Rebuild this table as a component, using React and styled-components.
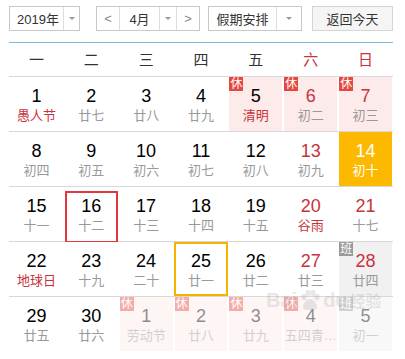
import React from "react";
import styled, { createGlobalStyle, css } from "styled-components";

const Global = createGlobalStyle`
  html, body { margin: 0; padding: 0; background: #fff; }
  body { font-family: "Liberation Sans", "Noto Sans CJK SC", sans-serif; }
`;

const Page = styled.div`
  width: 384px;
  padding: 6px 0 0 9px;
  position: relative;
`;

const Toolbar = styled.div`
  display: flex;
  height: 25px;
  align-items: stretch;
  font-size: 13px;
  color: #333;
`;

const Select = styled.div`
  display: flex;
  width: ${(p) => p.$w}px;
  margin-left: ${(p) => p.$ml || 0}px;
  border: 1px solid #c8c8c8;
  box-sizing: border-box;
  background: #fff;
`;

const SelText = styled.div`
  flex: 1;
  display: flex;
  align-items: center;
  justify-content: center;
  padding-left: ${(p) => p.$pl || 0}px;
`;

const Caret = styled.div`
  width: ${(p) => p.$w || 15}px;
  border-left: 1px solid #ddd;
  display: flex;
  align-items: center;
  justify-content: center;
  &::after {
    content: "";
    border-left: 3px solid transparent;
    border-right: 3px solid transparent;
    border-top: 3px solid #999;
  }
`;

const Arrow = styled.div`
  width: 22px;
  display: flex;
  align-items: center;
  justify-content: center;
  color: #888;
  font-size: 13px;
  ${(p) => (p.$side === "l" ? "border-right: 1px solid #ddd;" : "border-left: 1px solid #ddd;")}
`;

const Button = styled.div`
  width: 81px;
  margin-left: 10px;
  border: 1px solid #d5d5d5;
  box-sizing: border-box;
  background: #f5f5f5;
  display: flex;
  align-items: center;
  justify-content: center;
`;

const Divider = styled.div`
  height: 1px;
  background: #7dbcd9;
  margin-top: 11px;
`;

const Head = styled.div`
  display: grid;
  grid-template-columns: repeat(7, 1fr);
  height: 33px;
  border-bottom: 1px solid #d8d8d8;
`;

const HeadCell = styled.div`
  line-height: 33px;
  text-align: center;
  font-size: 15px;
  color: ${(p) => (p.$red ? "#c6343b" : "#333")};
`;

const Row = styled.div`
  display: grid;
  grid-template-columns: repeat(7, 1fr);
  height: 54px;
  border-bottom: ${(p) => (p.$last ? "none" : "1px solid #d8d8d8")};
`;

const Cell = styled.div`
  position: relative;
  margin: 0 1px;
  text-align: center;
  padding-top: 8px;
  box-sizing: border-box;
  background: ${(p) =>
    p.$today ? "#fdb900" : p.$kind === "rest" ? "#fdeaea" : p.$kind === "work" ? "#f1f1f1" : "#fff"};
  opacity: ${(p) => (p.$faded ? 0.45 : 1)};
  ${(p) =>
    p.$selected &&
    css`
      &::after {
        content: "";
        position: absolute;
        left: -1px;
        right: -1px;
        top: 0;
        bottom: 0;
        border: 2px solid #f4b400;
        box-sizing: border-box;
      }
    `}
  ${(p) =>
    p.$marked &&
    css`
      &::after {
        content: "";
        position: absolute;
        left: 0;
        right: 0;
        top: 4px;
        bottom: -2px;
        border: 2px solid #e0383f;
        box-sizing: border-box;
      }
    `}
`;

const Num = styled.div`
  font-size: 18px;
  line-height: 22px;
  color: ${(p) => (p.$today ? "#fff" : p.$red ? "#c6343b" : "#000")};
`;

const Lunar = styled.div`
  font-size: 13px;
  line-height: 18px;
  white-space: nowrap;
  overflow: hidden;
  color: ${(p) => (p.$today ? "#fff" : p.$fest ? "#c6343b" : "#999")};
`;

const Badge = styled.div`
  position: absolute;
  left: 0;
  top: 0;
  width: 14px;
  height: 14px;
  line-height: 14px;
  font-size: 12px;
  color: #fff;
  text-align: center;
  background: ${(p) => (p.$work ? "#9a9a9a" : "#e5483f")};
`;

const Watermark = styled.div`
  position: absolute;
  left: 266px;
  top: 288px;
  display: flex;
  align-items: center;
  gap: 2px;
  color: rgba(150, 150, 150, 0.22);
  font-size: 20px;
  font-weight: bold;
  pointer-events: none;
`;

const WmSmall = styled.span`
  font-size: 16px;
`;

const wk = ["一", "二", "三", "四", "五", "六", "日"];

const rows = [
  [
    { n: 1, l: "愚人节", f: 1 },
    { n: 2, l: "廿七" },
    { n: 3, l: "廿八" },
    { n: 4, l: "廿九" },
    { n: 5, l: "清明", f: 1, k: "rest" },
    { n: 6, l: "初二", k: "rest" },
    { n: 7, l: "初三", k: "rest" },
  ],
  [
    { n: 8, l: "初四" },
    { n: 9, l: "初五" },
    { n: 10, l: "初六" },
    { n: 11, l: "初七" },
    { n: 12, l: "初八" },
    { n: 13, l: "初九" },
    { n: 14, l: "初十", today: 1 },
  ],
  [
    { n: 15, l: "十一" },
    { n: 16, l: "十二", marked: 1 },
    { n: 17, l: "十三" },
    { n: 18, l: "十四" },
    { n: 19, l: "十五" },
    { n: 20, l: "谷雨", f: 1 },
    { n: 21, l: "十七" },
  ],
  [
    { n: 22, l: "地球日", f: 1 },
    { n: 23, l: "十九" },
    { n: 24, l: "二十" },
    { n: 25, l: "廿一", sel: 1 },
    { n: 26, l: "廿二" },
    { n: 27, l: "廿三" },
    { n: 28, l: "廿四", k: "work" },
  ],
  [
    { n: 29, l: "廿五" },
    { n: 30, l: "廿六" },
    { n: 1, l: "劳动节", k: "rest", fade: 1 },
    { n: 2, l: "廿八", k: "rest", fade: 1 },
    { n: 3, l: "廿九", k: "rest", fade: 1 },
    { n: 4, l: "五四青…", k: "rest", fade: 1 },
    { n: 5, l: "初一", k: "work", fade: 1 },
  ],
];

export default function App() {
  return (
    <Page>
      <Global />
      <Toolbar>
        <Select $w={71}>
          <SelText $pl={3}>2019年</SelText>
          <Caret />
        </Select>
        <Select $w={104} $ml={16}>
          <Arrow $side="l">&lt;</Arrow>
          <SelText>4月</SelText>
          <Caret $w={16} />
          <Arrow $side="r">&gt;</Arrow>
        </Select>
        <Select $w={94} $ml={8}>
          <SelText>假期安排</SelText>
          <Caret $w={24} />
        </Select>
        <Button>返回今天</Button>
      </Toolbar>
      <Divider />
      <Head>
        {wk.map((w, i) => (
          <HeadCell key={w} $red={i >= 5}>
            {w}
          </HeadCell>
        ))}
      </Head>
      {rows.map((r, ri) => (
        <Row key={ri} $last={ri === rows.length - 1}>
          {r.map((c, ci) => (
            <Cell
              key={ci}
              $kind={c.k}
              $today={c.today}
              $selected={c.sel}
              $marked={c.marked}
              $faded={c.fade}
            >
              {c.k && <Badge $work={c.k === "work"}>{c.k === "work" ? "班" : "休"}</Badge>}
              <Num $red={ci >= 5 && !c.fade} $today={c.today}>
                {c.n}
              </Num>
              <Lunar $fest={c.f && !c.fade} $today={c.today}>
                {c.l}
              </Lunar>
            </Cell>
          ))}
        </Row>
      ))}
      <Watermark aria-hidden="true">
        <span>Bai</span>
        <svg width="22" height="22" viewBox="0 0 22 22" fill="rgba(150,150,150,0.22)">
          <ellipse cx="5" cy="8" rx="2.5" ry="3.2" />
          <ellipse cx="9" cy="4" rx="2.5" ry="3.2" />
          <ellipse cx="14" cy="4" rx="2.5" ry="3.2" />
          <ellipse cx="18" cy="8" rx="2.5" ry="3.2" />
          <path d="M11 10c-4 0-7 5-7 8 0 2 2 3 4 3h6c2 0 4-1 4-3 0-3-3-8-7-8z" />
        </svg>
        <span>du</span>
        <WmSmall>经验</WmSmall>
      </Watermark>
    </Page>
  );
}
